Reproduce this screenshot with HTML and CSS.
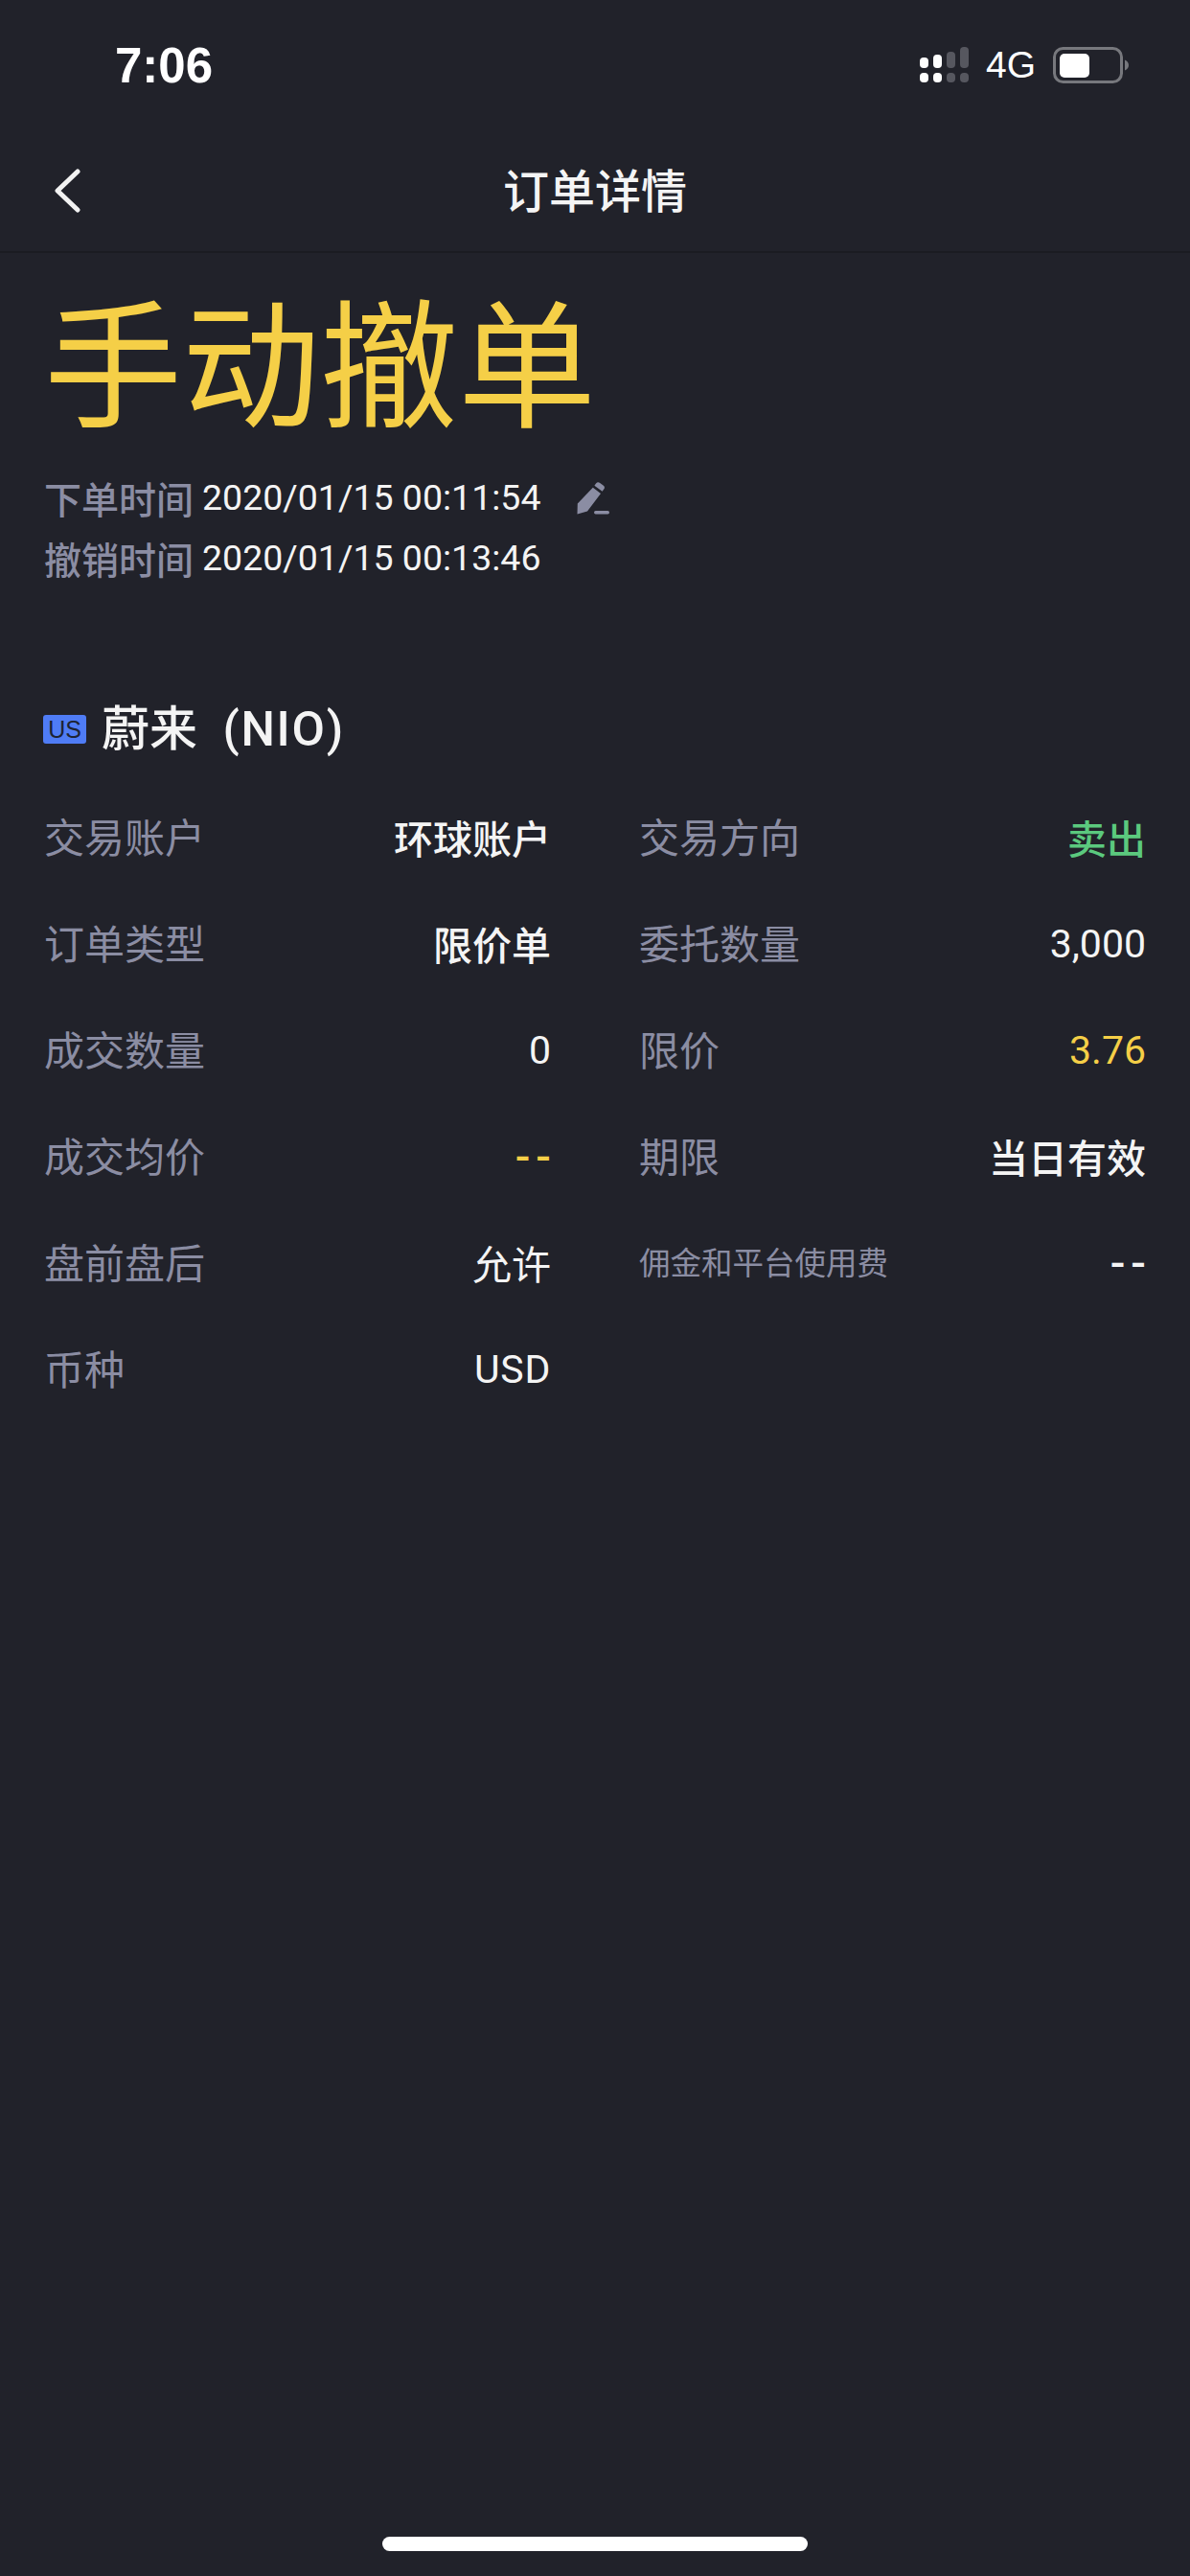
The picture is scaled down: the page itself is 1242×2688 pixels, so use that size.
FILE: index.html
```html
<!DOCTYPE html>
<html lang="zh-CN">
<head>
<meta charset="UTF-8" />
<meta name="viewport" content="width=device-width, initial-scale=1" />
<title>订单详情</title>
<link rel="stylesheet" href="styles.css">
</head>
<body>

<div class="page">
  <div class="status-bar">
    <span class="clock">7:06</span>
    <div class="status-icons">
      <svg class="signal" width="52" height="38" viewBox="0 0 52 38">
        <rect x="0" y="11" width="9" height="11" rx="4" fill="#fff"/>
        <rect x="14" y="8" width="9" height="14" rx="4" fill="#fff"/>
        <rect x="28" y="5" width="9" height="17" rx="4" fill="#56575f"/>
        <rect x="42" y="0" width="9" height="22" rx="4" fill="#56575f"/>
        <rect x="0" y="27" width="9" height="10" rx="4" fill="#fff"/>
        <rect x="14" y="27" width="9" height="10" rx="4" fill="#fff"/>
        <rect x="28" y="27" width="9" height="10" rx="4" fill="#56575f"/>
        <rect x="42" y="27" width="9" height="10" rx="4" fill="#56575f"/>
      </svg>
      <span class="network">4G</span>
      <svg class="battery" width="80" height="38" viewBox="0 0 80 38">
        <rect x="1.500" y="1.500" width="70" height="35" rx="9" fill="none" stroke="#77787d" stroke-width="3"/>
        <rect x="7" y="7" width="31" height="25" rx="5" fill="#fff"/>
        <path d="M75 13.500c2.500 1 4 3 4 5.500s-1.500 4.500-4 5.500z" fill="#77787d"/>
      </svg>
    </div>
  </div>

  <div class="nav-bar">
    <svg class="back" width="30" height="46" viewBox="0 0 30 46">
      <path d="M26 3 5 23l21 20" fill="none" stroke="#f2f2f2" stroke-width="5" stroke-linecap="round" stroke-linejoin="round"/>
    </svg>
    <div class="nav-title">订单详情</div>
  </div>

  <div class="summary">
    <h1 class="state">手动撤单</h1>
    <div class="time-row">
      <span class="time-label">下单时间</span>
      <span class="time-value">2020/01/15 00:11:54</span>
      <svg class="edit" width="36" height="36" viewBox="0 0 36 36">
        <path d="M22 3.500a3 3 0 0 1 4.200-.6l3.400 2.500a3 3 0 0 1 .6 4.200l-1.600 2.200-8.200-6.100zM18.800 7.800l8.200 6.100L13 32.500l-10.500 3 .3-11z" fill="#8b8da3"/>
        <rect x="20" y="32" width="16" height="3.500" rx="1.700" fill="#8b8da3"/>
      </svg>
    </div>
    <div class="time-row">
      <span class="time-label">撤销时间</span>
      <span class="time-value">2020/01/15 00:13:46</span>
    </div>
  </div>

  <div class="stock">
    <span class="market">US</span>
    <span class="stock-name">蔚来 <span class="ticker">(NIO)</span></span>
  </div>

  <div class="details">
    <div class="item"><span class="label">交易账户</span><span class="value strong">环球账户</span></div>
    <div class="item"><span class="label">交易方向</span><span class="value strong green">卖出</span></div>
    <div class="item"><span class="label">订单类型</span><span class="value strong">限价单</span></div>
    <div class="item"><span class="label">委托数量</span><span class="value num">3,000</span></div>
    <div class="item"><span class="label">成交数量</span><span class="value num">0</span></div>
    <div class="item"><span class="label">限价</span><span class="value num yellow">3.76</span></div>
    <div class="item"><span class="label">成交均价</span><span class="value dash yellow">--</span></div>
    <div class="item"><span class="label">期限</span><span class="value strong">当日有效</span></div>
    <div class="item"><span class="label">盘前盘后</span><span class="value">允许</span></div>
    <div class="item"><span class="label small">佣金和平台使用费</span><span class="value dash">--</span></div>
    <div class="item"><span class="label">币种</span><span class="value num wide">USD</span></div>
  </div>

  <div class="home-indicator"></div>
</div>

</body>
</html>
```

FILE: styles.css
```css
* {
  box-sizing: border-box;
}
body {
  margin: 0;
  background-color: #21222a;
  color: #f4f4f4;
  font-family: Roboto, "Noto Sans CJK SC", sans-serif;
}
.page {
  width: 1242px;
  height: 2688px;
  display: flex;
  flex-direction: column;
}
.status-bar {
  height: 136px;
  padding: 0 63px 0 120px;
  display: flex;
  justify-content: space-between;
  align-items: center;
}
.clock {
  font-family: "Liberation Sans", sans-serif;
  font-size: 51px;
  font-weight: 700;
  color: #fff;
}
.status-icons {
  display: flex;
  align-items: center;
}
.network {
  font-family: "Liberation Sans", sans-serif;
  font-size: 39px;
  color: #fff;
  margin: 0 18px 0 17px;
}
.nav-bar {
  height: 128px;
  padding: 0 55px;
  display: grid;
  grid-template-columns: 1fr auto 1fr;
  align-items: center;
  border-bottom: 2px solid #1b1c22;
}
.nav-title {
  font-size: 48px;
  font-weight: 500;
  margin-bottom: 6px;
}
.summary {
  padding: 22px 46px 0;
}
.state {
  margin: 0 0 1px;
  font-size: 144px;
  line-height: 200px;
  font-weight: 400;
  color: #f5cf47;
}
.time-row {
  display: flex;
  align-items: center;
  height: 63px;
  font-size: 39px;
}
.time-label {
  color: #8b8da3;
  font-weight: 500;
  margin-right: 9px;
}
.time-value {
  font-size: 37.500px;
}
.edit {
  margin-left: 36px;
}
.stock {
  display: flex;
  align-items: center;
  margin-top: 113px;
  padding: 0 45px;
}
.market {
  width: 45px;
  height: 30px;
  margin-right: 16px;
  border-radius: 3px;
  background: #4f7cf5;
  color: #1d2333;
  font-family: "Liberation Sans", sans-serif;
  font-size: 25px;
  line-height: 30px;
  text-align: center;
}
.stock-name {
  font-size: 50px;
  font-weight: 500;
  line-height: 70px;
  word-spacing: 14px;
}
.ticker {
  letter-spacing: 1.700px;
}
.details {
  display: grid;
  grid-template-columns: 529px 529px;
  column-gap: 92px;
  grid-auto-rows: 111px;
  padding: 0 46px;
  margin-top: 20px;
}
.item {
  display: flex;
  justify-content: space-between;
  align-items: center;
}
.label {
  font-size: 42px;
  color: #8b8da3;
}
.label.small {
  font-size: 32.500px;
}
.value {
  font-size: 41px;
  margin-top: 2px;
}
.strong {
  font-weight: 500;
}
.num {
  margin-top: 5px;
}
.wide {
  letter-spacing: .7px;
}
.dash {
  font-size: 46px;
  font-weight: 500;
  letter-spacing: 6px;
  margin-right: -6px;
  margin-top: 5px;
}
.green {
  color: #5bc97e;
}
.yellow {
  color: #f5cf47;
}
.home-indicator {
  width: 444px;
  height: 15px;
  margin: auto auto 26px;
  border-radius: 8px;
  background: #fff;
}
```
